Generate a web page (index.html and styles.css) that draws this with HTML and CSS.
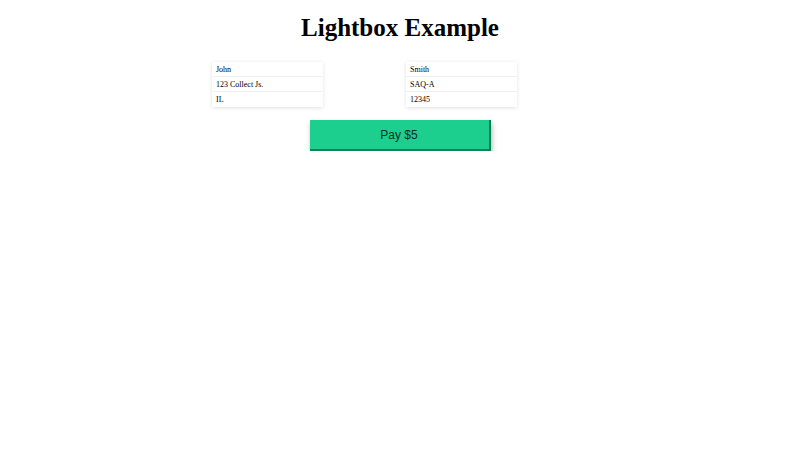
FILE: index.html
```html
<!DOCTYPE html>
<html>
<head>
<meta charset="utf-8">
<link rel="stylesheet" href="styles.css">
</head>
<body>
<h1 class="title">Lightbox Example</h1>
<div class="form">
  <div class="col">
    <div class="field">John</div>
    <div class="field">123 Collect Js.</div>
    <div class="field">IL</div>
  </div>
  <div class="col">
    <div class="field">Smith</div>
    <div class="field">SAQ-A</div>
    <div class="field">12345</div>
  </div>
</div>
<div class="actions">
  <button class="pay">Pay $5</button>
</div>
</body>
</html>
```
FILE: styles.css
```css
body {
  margin: 0 8px 8px;
  font-family: "Liberation Serif", serif;
  background: #fff;
  color: #000;
}
.title {
  text-align: center;
  font-size: 25px;
  font-weight: bold;
  margin: 0;
  padding: 13px 0 19px;
  line-height: 30px;
}
.form {
  display: flex;
  gap: 83px;
  padding-left: 204px;
}
.col {
  width: 111px;
  box-shadow: 0 1px 4px rgba(0, 0, 0, 0.12);
  background: #fff;
}
.field {
  height: 15px;
  line-height: 15px;
  font-size: 8px;
  padding: 0 4px;
  border-bottom: 1px solid #f0f0f0;
  box-sizing: border-box;
}
.field:last-child {
  border-bottom: none;
}
.actions {
  display: flex;
  justify-content: center;
  margin-top: 13px;
}
.pay {
  width: 181px;
  height: 31px;
  background: #1ccf8f;
  border: none;
  border-right: 2px solid #127a55;
  border-bottom: 2px solid #138058;
  box-shadow: 1px 3px 5px rgba(0, 0, 0, 0.3);
  font-family: "Liberation Sans", Arial, sans-serif;
  font-size: 12px;
  color: #0a2e21;
  padding: 0;
}
```
